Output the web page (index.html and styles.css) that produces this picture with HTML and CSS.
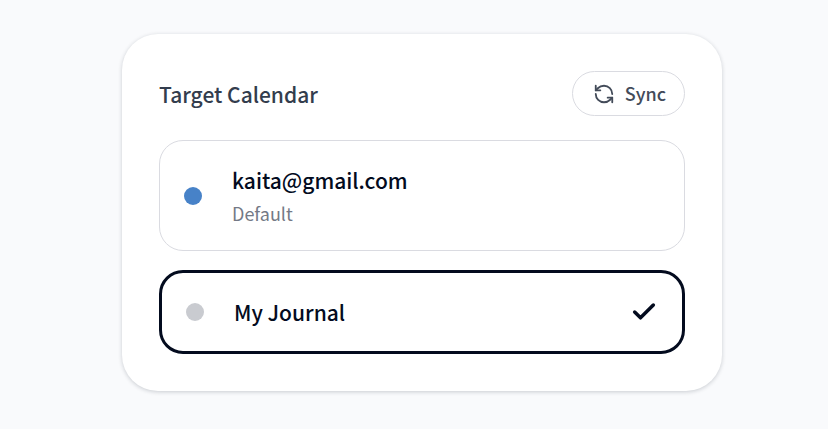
FILE: index.html
```html
<!DOCTYPE html>
<html lang="en">
<head>
    <meta charset="UTF-8">
    <meta name="viewport" content="width=device-width, initial-scale=1.0">
    <title>Target Calendar</title>
    <link rel="stylesheet" href="styles.css">
</head>
<body>
    <main class="card">
        <div class="card-header">
            <h1>Target Calendar</h1>
            <button type="button" class="sync-button">
                <svg class="sync-icon" viewBox="0 0 24 24" aria-hidden="true">
                    <path d="M21 12a9 9 0 0 0-9-9 9.75 9.75 0 0 0-6.74 2.74L3 8"/>
                    <path d="M3 3v5h5"/>
                    <path d="M3 12a9 9 0 0 0 9 9 9.75 9.75 0 0 0 6.74-2.74L21 16"/>
                    <path d="M16 16h5v5"/>
                </svg>
                Sync
            </button>
        </div>

        <div class="calendar-list">
            <label class="calendar" for="calendar-default">
                <input type="radio" class="dot dot-blue" name="calendar" id="calendar-default">
                <span class="calendar-text">
                    <span class="calendar-name">kaita@gmail.com</span>
                    <span class="calendar-note">Default</span>
                </span>
            </label>
            <label class="calendar selected" for="calendar-journal">
                <input type="radio" class="dot dot-gray" name="calendar" id="calendar-journal" checked>
                <span class="calendar-text">
                    <span class="calendar-name">My Journal</span>
                </span>
                <svg class="check-icon" viewBox="0 0 24 24" aria-hidden="true">
                    <path d="M20 6 9 17l-5-5"/>
                </svg>
            </label>
        </div>
    </main>
</body>
</html>
```

FILE: styles.css
```css
* {
    box-sizing: border-box;
}
body {
    margin: 0;
    padding: 34px 106px 38px 122px;
    background-color: #f9fafc;
    color: #030b1e;
    font-family: "Noto Sans CJK JP", "Noto Sans", sans-serif;
    font-weight: 500;
}
.card {
    padding: 37px;
    border-radius: 36px;
    background-color: #fff;
    box-shadow: 0 1px 4px rgba(15, 23, 42, 0.2);
}
.card-header {
    display: flex;
    align-items: center;
    justify-content: space-between;
    margin-bottom: 24px;
}
h1 {
    margin: 0;
    color: #333d4d;
    font-size: 21px;
    font-weight: 500;
    line-height: 32px;
}
.sync-button {
    display: flex;
    align-items: center;
    gap: 10px;
    padding: 8px 18px 8px 20px;
    border: 1px solid #dadbe1;
    border-radius: 24px;
    background-color: #fff;
    color: #434b59;
    font: inherit;
    font-size: 18px;
    line-height: 27px;
    cursor: pointer;
}
.sync-icon,
.check-icon {
    flex: none;
    fill: none;
    stroke: currentColor;
    stroke-width: 2;
    stroke-linecap: round;
    stroke-linejoin: round;
}
.sync-icon {
    width: 22px;
    height: 22px;
}
.check-icon {
    width: 28px;
    height: 28px;
    stroke-width: 3;
}
.calendar-list {
    display: flex;
    flex-direction: column;
    gap: 19px;
}
.calendar {
    display: flex;
    align-items: center;
    gap: 30px;
    padding: 23px 24px;
    border: 1px solid #dadbe1;
    border-radius: 24px;
    cursor: pointer;
}
.calendar.selected {
    border: 3px solid #030b1e;
}
.calendar-text {
    display: flex;
    flex: 1;
    flex-direction: column;
    gap: 4px;
}
.calendar-name {
    font-size: 21px;
    line-height: 32px;
}
.calendar-note {
    color: #747986;
    font-size: 18px;
    font-weight: 400;
    line-height: 27px;
}
.dot {
    flex: none;
    width: 18px;
    height: 18px;
    margin: 0;
    border-radius: 50%;
    appearance: none;
}
.dot-blue {
    background-color: #4782c8;
}
.dot-gray {
    background-color: #c9cbd0;
}
```
